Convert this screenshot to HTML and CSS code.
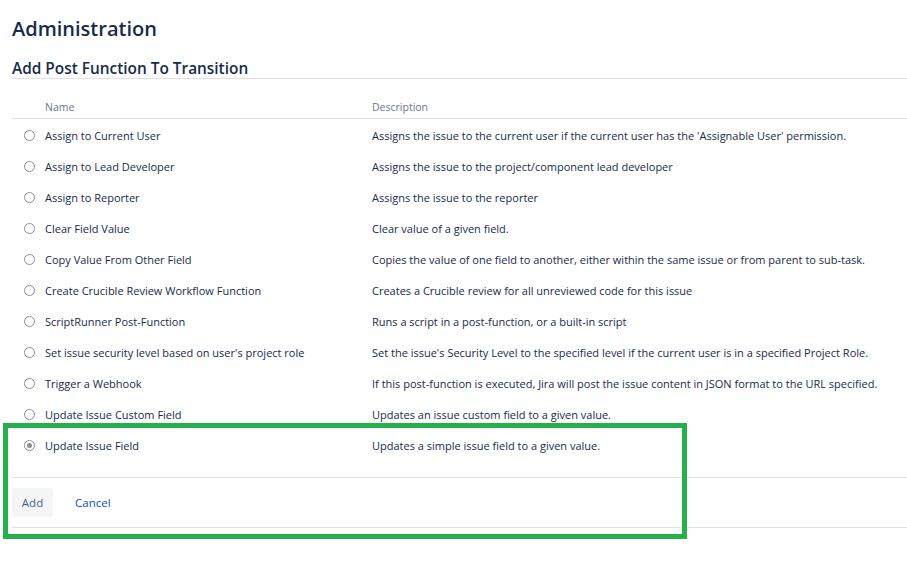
FILE: index.html
```html
<!doctype html>
<html>
  <head>
    <title>Add Post Function To Transition</title>
    <link rel="stylesheet" href="styles.css">
  </head>
  <body>

    <h1>Administration</h1>
    <h2>Add Post Function To Transition</h2>

    <table class="functions">
      <thead>
        <tr>
          <th class="col-radio"></th>
          <th class="col-name">Name</th>
          <th>Description</th>
        </tr>
      </thead>
      <tbody>
        <tr>
          <td class="col-radio"><span class="radio"></span></td>
          <td class="col-name">Assign to Current User</td>
          <td>Assigns the issue to the current user if the current user has the 'Assignable User' permission.</td>
        </tr>
        <tr>
          <td class="col-radio"><span class="radio"></span></td>
          <td class="col-name">Assign to Lead Developer</td>
          <td>Assigns the issue to the project/component lead developer</td>
        </tr>
        <tr>
          <td class="col-radio"><span class="radio"></span></td>
          <td class="col-name">Assign to Reporter</td>
          <td>Assigns the issue to the reporter</td>
        </tr>
        <tr>
          <td class="col-radio"><span class="radio"></span></td>
          <td class="col-name">Clear Field Value</td>
          <td>Clear value of a given field.</td>
        </tr>
        <tr>
          <td class="col-radio"><span class="radio"></span></td>
          <td class="col-name">Copy Value From Other Field</td>
          <td>Copies the value of one field to another, either within the same issue or from parent to sub-task.</td>
        </tr>
        <tr>
          <td class="col-radio"><span class="radio"></span></td>
          <td class="col-name">Create Crucible Review Workflow Function</td>
          <td>Creates a Crucible review for all unreviewed code for this issue</td>
        </tr>
        <tr>
          <td class="col-radio"><span class="radio"></span></td>
          <td class="col-name">ScriptRunner Post-Function</td>
          <td>Runs a script in a post-function, or a built-in script</td>
        </tr>
        <tr>
          <td class="col-radio"><span class="radio"></span></td>
          <td class="col-name">Set issue security level based on user's project role</td>
          <td>Set the issue's Security Level to the specified level if the current user is in a specified Project Role.</td>
        </tr>
        <tr>
          <td class="col-radio"><span class="radio"></span></td>
          <td class="col-name">Trigger a Webhook</td>
          <td>If this post-function is executed, Jira will post the issue content in JSON format to the URL specified.</td>
        </tr>
        <tr>
          <td class="col-radio"><span class="radio"></span></td>
          <td class="col-name">Update Issue Custom Field</td>
          <td>Updates an issue custom field to a given value.</td>
        </tr>
        <tr>
          <td class="col-radio"><span class="radio checked"></span></td>
          <td class="col-name">Update Issue Field</td>
          <td>Updates a simple issue field to a given value.</td>
        </tr>
      </tbody>
    </table>

    <!--Form buttons-->
    <div class="buttons">
      <button class="btn">Add</button>
      <a href="#" class="cancel">Cancel</a>
    </div>

    <!--Highlight around the selected function-->
    <div class="highlight"></div>

  </body>
</html>
```

FILE: styles.css
```css
body {
  margin:0;
  padding:0 0 0 12px;
  font-family: 'Open Sans', 'Noto Sans', sans-serif;
  font-size:11px;
  color:#172b4d;
  background:#fff;
}

h1 {
  margin:15px 0 0;
  font-size:20px;
  font-weight:600;
  line-height:28px;
}

h2 {
  margin:16px 0 0;
  font-size:15.4px;
  font-weight:600;
  line-height:19px;
  border-bottom:1px solid #dfe1e6;
}

.functions {
  width:100%;
  margin-top:17px;
  border-collapse:collapse;
  white-space:nowrap;
}
.functions th {
  height:22px;
  padding:0;
  text-align:left;
  font-size:10.5px;
  font-weight:400;
  color:#6b778c;
  border-bottom:1px solid #dfe1e6;
}
.functions td {
  height:29px;
  padding:2px 0 0;
  vertical-align:middle;
}
.col-radio {
  width:33px;
}
.col-name {
  width:327px;
}

.radio {
  display:block;
  width:9px;
  height:9px;
  margin-left:12px;
  border:1px solid #8f8f8f;
  border-radius:50%;
  position:relative;
}
.radio.checked::after {
  content:'';
  position:absolute;
  left:2px;
  top:2px;
  width:5px;
  height:5px;
  border-radius:50%;
  background:#8f8f8f;
}

.buttons {
  margin-top:17px;
  padding:10px 0;
  display:flex;
  align-items:center;
  gap:22px;
  border-top:1px solid #dfe1e6;
  border-bottom:1px solid #dfe1e6;
}
.btn {
  height:29px;
  width:41px;
  padding:0;
  border:0;
  border-radius:3px;
  background:#f4f5f7;
  color:#505f79;
  font-family:inherit;
  font-size:11.5px;
}
.cancel {
  color:#0052cc;
  font-size:11.5px;
  text-decoration:none;
}

.highlight {
  position:absolute;
  left:3px;
  top:423px;
  width:684px;
  height:116px;
  box-sizing:border-box;
  border:5px solid #25b04b;
}
```
